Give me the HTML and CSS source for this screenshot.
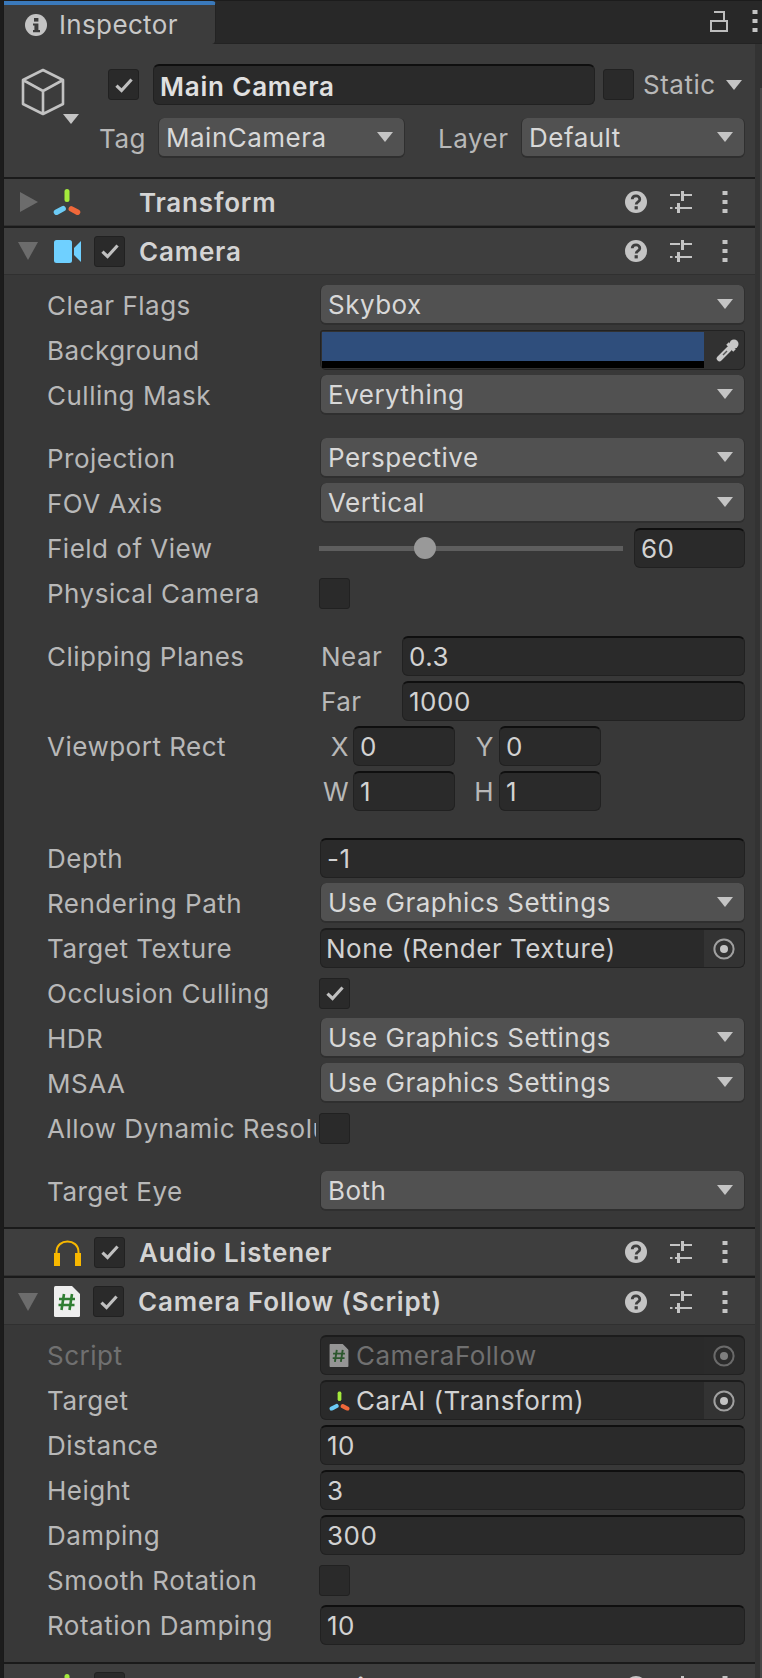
FILE: index.html
```html
<!DOCTYPE html>
<html lang="en">
<head>
    <meta charset="UTF-8">
    <meta name="viewport" content="width=device-width, initial-scale=1.0">
    <title>Inspector</title>
    <link rel="stylesheet" href="styles.css">
</head>
<body>
    <!-- Shared icons -->
    <svg class="defs" width="0" height="0">
        <symbol id="i-check" viewBox="0 0 16 16"><path d="M2.5 8.5 L6.2 12 L13.5 4" fill="none" stroke="currentColor" stroke-width="2.3"/></symbol>
        <symbol id="i-help" viewBox="0 0 22 22"><circle cx="11" cy="11" r="11" fill="#c4c4c4"/><path d="M7.2 8.3 C7.4 3.8 14.8 3.8 14.8 8.3 C14.8 11 11.2 10.8 11.2 13.6" fill="none" stroke="#3e3e3e" stroke-width="2.8"/><rect x="9.6" y="15.2" width="3.2" height="3.2" fill="#3e3e3e"/></symbol>
        <symbol id="i-presets" viewBox="0 0 22 22"><path d="M0 4 H10 M14 4 H22 M0 17 H2.500 M5 17 H7 M9 17 H22" fill="none" stroke="#c4c4c4" stroke-width="2"/><rect x="11" y="0" width="3" height="10" fill="#c4c4c4"/><rect x="7" y="12" width="3" height="10" fill="#c4c4c4"/></symbol>
        <symbol id="i-more" viewBox="0 0 6 22"><rect x="0.5" y="0" width="5" height="4" fill="#c4c4c4"/><rect x="0.5" y="9" width="5" height="4" fill="#c4c4c4"/><rect x="0.5" y="18" width="5" height="4" fill="#c4c4c4"/></symbol>
        <symbol id="i-axes" viewBox="0 0 28 26"><rect x="11.5" y="0" width="5" height="13" rx="2.5" fill="#a4ea3c"/><rect x="0" y="19" width="13" height="5.5" rx="2.7" transform="rotate(-28 6 21)" fill="#6ccbf5"/><rect x="15.5" y="19" width="12.5" height="5.5" rx="2.7" transform="rotate(28 22 21)" fill="#f0683a"/></symbol>
        <symbol id="i-script" viewBox="0 0 26 31"><path d="M0 1.5 Q0 0 1.5 0 H18 L26 8 V29.5 Q26 31 24.5 31 H1.5 Q0 31 0 29.5 Z" fill="#eeeeee"/><path d="M10 8 L7.5 24 M18 8 L15.5 24 M5 13 H21 M4.5 19 H20.5" fill="none" stroke="#2f7d32" stroke-width="2.6"/></symbol>
        <symbol id="i-target" viewBox="0 0 22 22"><circle cx="11" cy="11" r="9.6" fill="none" stroke="#a0a0a0" stroke-width="2"/><circle cx="11" cy="11" r="4" fill="#c4c4c4"/></symbol>
    </svg>

    <div class="panel">
        <div class="tabbar">
            <div class="tab">
                <svg class="tab-icon" viewBox="0 0 22 22"><circle cx="11" cy="11" r="11" fill="#c4c4c4"/><rect x="9" y="4" width="4.4" height="3.6" fill="#3c3c3c"/><path d="M8 9.4 H13.4 V16 H15 V18.2 H8 V16 H9.4 V11.6 H8 Z" fill="#3c3c3c"/></svg>
                <span>Inspector</span>
            </div>
            <div class="tab-actions">
                <svg class="lock" viewBox="0 0 18 22"><path d="M1 11 H17 V21 H1 Z M4 2 H14 V11" fill="none" stroke="#bdbdbd" stroke-width="2"/></svg>
                <svg class="tab-more" viewBox="0 0 6 22"><use href="#i-more"/></svg>
            </div>
        </div>

        <div class="panel-main">
            <div class="content">
                <div class="object-head">
                    <div class="object-icon">
                        <svg class="cube" viewBox="0 0 44 48"><path d="M22 2 L42 12 V36 L22 46 L2 36 V12 Z M2 12 L22 23 L42 12 M22 23 V46" fill="none" stroke="#c2c2c2" stroke-width="2.6" stroke-linejoin="round"/></svg>
                        <i class="arrow object-arrow"></i>
                    </div>
                    <div class="object-fields">
                        <div class="object-line">
                            <span class="check on"><svg viewBox="0 0 16 16"><use href="#i-check"/></svg></span>
                            <div class="field name-field">Main Camera</div>
                            <span class="check"></span>
                            <span class="static-label">Static</span>
                            <i class="arrow"></i>
                        </div>
                        <div class="object-line tag-line">
                            <span class="tag-label">Tag</span>
                            <div class="dropdown tag-drop">MainCamera<i class="arrow"></i></div>
                            <span class="layer-label">Layer</span>
                            <div class="dropdown layer-drop">Default<i class="arrow"></i></div>
                        </div>
                    </div>
                </div>

                <div class="comp-head">
                    <i class="fold closed"></i>
                    <svg class="comp-icon axes" viewBox="0 0 28 26"><use href="#i-axes"/></svg>
                    <span class="no-check"></span>
                    <span class="comp-title">Transform</span>
                    <div class="comp-tools">
                        <svg class="tool" viewBox="0 0 22 22"><use href="#i-help"/></svg>
                        <svg class="tool" viewBox="0 0 22 22"><use href="#i-presets"/></svg>
                        <svg class="tool-more" viewBox="0 0 6 22"><use href="#i-more"/></svg>
                    </div>
                </div>

                <div class="comp-head">
                    <i class="fold"></i>
                    <svg class="comp-icon" viewBox="0 0 27 23"><rect x="0" y="0" width="18" height="23" rx="2.5" fill="#6fd0ff"/><path d="M20 8 L27 1 V22 L20 15 Z" fill="#6fd0ff"/></svg>
                    <span class="check on"><svg viewBox="0 0 16 16"><use href="#i-check"/></svg></span>
                    <span class="comp-title">Camera</span>
                    <div class="comp-tools">
                        <svg class="tool" viewBox="0 0 22 22"><use href="#i-help"/></svg>
                        <svg class="tool" viewBox="0 0 22 22"><use href="#i-presets"/></svg>
                        <svg class="tool-more" viewBox="0 0 6 22"><use href="#i-more"/></svg>
                    </div>
                </div>
                <div class="comp-body">
                    <div class="row"><label>Clear Flags</label><div class="dropdown">Skybox<i class="arrow"></i></div></div>
                    <div class="row">
                        <label>Background</label>
                        <div class="color-field">
                            <div class="swatch"><div class="swatch-alpha"></div></div>
                            <svg class="picker" viewBox="0 0 24 24"><path d="M3.500 20.500 L13 11" stroke="#c8c8c8" stroke-width="5.500" stroke-linecap="round"/><path d="M7 17 L11 13" stroke="#555555" stroke-width="1.500"/><path d="M11.500 5.500 L18.500 12.500" stroke="#c8c8c8" stroke-width="3.500"/><circle cx="18" cy="6" r="4.500" fill="#c8c8c8"/></svg>
                        </div>
                    </div>
                    <div class="row"><label>Culling Mask</label><div class="dropdown">Everything<i class="arrow"></i></div></div>

                    <div class="row gap-top"><label>Projection</label><div class="dropdown">Perspective<i class="arrow"></i></div></div>
                    <div class="row"><label>FOV Axis</label><div class="dropdown">Vertical<i class="arrow"></i></div></div>
                    <div class="row">
                        <label>Field of View</label>
                        <div class="slider"><div class="track"></div><div class="thumb"></div></div>
                        <div class="field slider-value">60</div>
                    </div>
                    <div class="row"><label>Physical Camera</label><span class="check"></span></div>

                    <div class="row gap-top"><label>Clipping Planes</label><span class="sub-label">Near</span><div class="field">0.3</div></div>
                    <div class="row"><label></label><span class="sub-label">Far</span><div class="field">1000</div></div>
                    <div class="row">
                        <label>Viewport Rect</label>
                        <div class="rect-group">
                            <span class="axis">X</span><div class="field rect-field">0</div>
                            <span class="axis second">Y</span><div class="field rect-field">0</div>
                        </div>
                    </div>
                    <div class="row">
                        <label></label>
                        <div class="rect-group">
                            <span class="axis">W</span><div class="field rect-field">1</div>
                            <span class="axis second">H</span><div class="field rect-field">1</div>
                        </div>
                    </div>

                    <div class="row gap-large"><label>Depth</label><div class="field">-1</div></div>
                    <div class="row"><label>Rendering Path</label><div class="dropdown">Use Graphics Settings<i class="arrow"></i></div></div>
                    <div class="row"><label>Target Texture</label><div class="field object-field">None (Render Texture)<span class="target-btn"><svg viewBox="0 0 22 22"><use href="#i-target"/></svg></span></div></div>
                    <div class="row"><label>Occlusion Culling</label><span class="check on"><svg viewBox="0 0 16 16"><use href="#i-check"/></svg></span></div>
                    <div class="row"><label>HDR</label><div class="dropdown">Use Graphics Settings<i class="arrow"></i></div></div>
                    <div class="row"><label>MSAA</label><div class="dropdown">Use Graphics Settings<i class="arrow"></i></div></div>
                    <div class="row"><label>Allow Dynamic Resolution</label><span class="check"></span></div>

                    <div class="row gap-top"><label>Target Eye</label><div class="dropdown">Both<i class="arrow"></i></div></div>
                </div>

                <div class="comp-head">
                    <i class="fold none"></i>
                    <svg class="comp-icon" viewBox="0 0 27 27"><path d="M2.500 25 V13 C2.500 -1 24.500 -1 24.500 13 V25" fill="none" stroke="#f8b800" stroke-width="2"/><rect x="0" y="14" width="6" height="13" fill="#f8b800"/><rect x="21" y="14" width="6" height="13" fill="#f8b800"/></svg>
                    <span class="check on"><svg viewBox="0 0 16 16"><use href="#i-check"/></svg></span>
                    <span class="comp-title">Audio Listener</span>
                    <div class="comp-tools">
                        <svg class="tool" viewBox="0 0 22 22"><use href="#i-help"/></svg>
                        <svg class="tool" viewBox="0 0 22 22"><use href="#i-presets"/></svg>
                        <svg class="tool-more" viewBox="0 0 6 22"><use href="#i-more"/></svg>
                    </div>
                </div>

                <div class="comp-head follow-head">
                    <i class="fold"></i>
                    <svg class="comp-icon script-icon" viewBox="0 0 26 31"><use href="#i-script"/></svg>
                    <span class="check on"><svg viewBox="0 0 16 16"><use href="#i-check"/></svg></span>
                    <span class="comp-title">Camera Follow (Script)</span>
                    <div class="comp-tools">
                        <svg class="tool" viewBox="0 0 22 22"><use href="#i-help"/></svg>
                        <svg class="tool" viewBox="0 0 22 22"><use href="#i-presets"/></svg>
                        <svg class="tool-more" viewBox="0 0 6 22"><use href="#i-more"/></svg>
                    </div>
                </div>
                <div class="comp-body follow-body">
                    <div class="row disabled">
                        <label>Script</label>
                        <div class="field object-field">
                            <svg class="inline-script" viewBox="0 0 26 31"><use href="#i-script"/></svg>CameraFollow
                            <span class="target-btn"><svg viewBox="0 0 22 22"><use href="#i-target"/></svg></span>
                        </div>
                    </div>
                    <div class="row">
                        <label>Target</label>
                        <div class="field object-field">
                            <svg class="inline-axes" viewBox="0 0 28 26"><use href="#i-axes"/></svg>CarAI (Transform)
                            <span class="target-btn"><svg viewBox="0 0 22 22"><use href="#i-target"/></svg></span>
                        </div>
                    </div>
                    <div class="row"><label>Distance</label><div class="field">10</div></div>
                    <div class="row"><label>Height</label><div class="field">3</div></div>
                    <div class="row"><label>Damping</label><div class="field">300</div></div>
                    <div class="row"><label>Smooth Rotation</label><span class="check"></span></div>
                    <div class="row"><label>Rotation Damping</label><div class="field">10</div></div>
                </div>

                <div class="comp-head">
                    <i class="fold none"></i>
                    <svg class="comp-icon axes" viewBox="0 0 28 26"><use href="#i-axes"/></svg>
                    <span class="check"></span>
                    <span class="comp-title">Tracked Pose Driver</span>
                    <div class="comp-tools">
                        <svg class="tool" viewBox="0 0 22 22"><use href="#i-help"/></svg>
                        <svg class="tool" viewBox="0 0 22 22"><use href="#i-presets"/></svg>
                        <svg class="tool-more" viewBox="0 0 6 22"><use href="#i-more"/></svg>
                    </div>
                </div>
            </div>
            <div class="scrollbar"><div class="scroll-thumb"></div></div>
        </div>
    </div>
</body>
</html>
```

FILE: styles.css
```css
* {
    margin: 0;
    padding: 0;
    box-sizing: border-box;
}

html, body {
    width: 762px;
    height: 1678px;
    overflow: hidden;
}

body {
    padding-left: 3px;
    background-color: #1c1c1c;
    color: #d2d2d2;
    font-family: 'Inter', 'Liberation Sans', sans-serif;
    font-size: 26px;
    letter-spacing: 0.5px;
}

.defs {
    position: absolute;
}

.panel {
    height: 1678px;
    border-left: 1px solid #1a1a1a;
    overflow: hidden;
}

/* Tab bar */
.tabbar {
    height: 44px;
    display: flex;
    justify-content: space-between;
    background-color: #282828;
    border-top: 1px solid #1c1c1c;
    border-bottom: 1px solid #232323;
}

.tab {
    width: 212px;
    height: 43px;
    display: flex;
    align-items: center;
    gap: 12px;
    padding-left: 21px;
    letter-spacing: 0.35px;
    color: #c8c8c8;
    background-color: #3c3c3c;
    border-top: 4px solid #3a79bb;
    border-right: 1px solid #232323;
    border-radius: 0 4px 4px 0;
}

.tab-icon {
    width: 22px;
    height: 22px;
}

.tab-actions {
    display: flex;
    align-items: center;
    gap: 24px;
    padding: 0 4px 3px 0;
}

.lock {
    width: 18px;
    height: 22px;
}

.tab-more {
    width: 6px;
    height: 22px;
}

.panel-main {
    display: flex;
}

.content {
    flex: none;
    width: 751px;
    background-color: #383838;
}

.scrollbar {
    flex: 1;
    height: 1634px;
    padding: 44px 0 0 5px;
    background-color: #333333;
}

.scroll-thumb {
    height: 1590px;
    background-color: #474747;
}

/* Object header */
.object-head {
    height: 133px;
    display: flex;
    background-color: #3c3c3c;
}

.object-icon {
    position: relative;
    flex: none;
    width: 96px;
    padding: 24px 0 0 17px;
}

.cube {
    display: block;
    width: 44px;
    height: 48px;
}

.object-arrow {
    position: absolute;
    left: 59px;
    top: 70px;
}

.object-fields {
    flex: 1;
    padding-top: 20px;
}

.object-line {
    height: 41px;
    display: flex;
    align-items: center;
    padding-left: 8px;
}

.object-line .name-field {
    flex: none;
    width: 442px;
    height: 41px;
    margin: 0 8px 0 14px;
    padding-top: 3px;
    font-weight: 600;
    letter-spacing: 0.8px;
    color: #e0e0e0;
}

.static-label {
    margin: 0 10px 0 9px;
    color: #b8b8b8;
}

.object-line.tag-line {
    padding-left: 0;
    margin-top: 13px;
    height: 40px;
}

.tag-label, .layer-label {
    flex: none;
    color: #b8b8b8;
}

.tag-label {
    width: 58px;
    margin-left: -1px;
    margin-right: 1px;
}

.object-line .tag-drop {
    flex: none;
    width: 247px;
}

.layer-label {
    width: 83px;
    margin-left: 33px;
}

.object-line .layer-drop {
    flex: none;
    width: 224px;
}

/* Component header */
.comp-head {
    height: 49px;
    display: flex;
    align-items: center;
    background-color: #3e3e3e;
    border-top: 2px solid #1a1a1a;
    border-bottom: 1px solid #303030;
}

.follow-head {
    padding-top: 1px;
}

.fold {
    flex: none;
    width: 0;
    height: 0;
    margin-left: 14px;
    border-style: solid;
    border-width: 18px 10px 0 10px;
    border-color: #6c6c6c transparent transparent transparent;
}

.fold.closed {
    margin-left: 16px;
    border-width: 10px 0 10px 18px;
    border-color: transparent transparent transparent #6c6c6c;
}

.fold.none {
    visibility: hidden;
}

.comp-icon {
    flex: none;
    width: 27px;
    height: 27px;
    margin-left: 16px;
}

.comp-icon.axes {
    width: 28px;
    height: 26px;
    margin-left: 15px;
}

.comp-icon.script-icon {
    width: 26px;
    height: 31px;
}

.no-check {
    flex: none;
    width: 31px;
    margin-left: 13px;
}

.comp-head .check {
    margin-left: 13px;
}

.comp-title {
    margin-left: 14px;
    font-weight: 600;
    letter-spacing: 0.8px;
    white-space: nowrap;
    color: #d4d4d4;
}

.comp-tools {
    margin-left: auto;
    display: flex;
    align-items: center;
    padding-right: 27px;
}

.tool {
    width: 22px;
    height: 22px;
    margin-right: 23px;
}

.tool:nth-child(2) {
    margin-right: 30px;
}

.tool-more {
    width: 6px;
    height: 22px;
}

/* Property rows */
.comp-body {
    padding: 10px 10px 11px 43px;
}

.follow-body {
    padding-bottom: 12px;
}

.row {
    height: 40px;
    margin-bottom: 5px;
    display: flex;
    align-items: center;
}

.gap-top {
    margin-top: 23px;
}

.gap-large {
    margin-top: 27px;
}

.row label {
    flex: none;
    width: 269px;
    margin-right: 4px;
    white-space: nowrap;
    overflow: hidden;
    color: #b8b8b8;
}

.row > .check {
    margin-left: -1px;
}

.disabled label, .disabled .field {
    color: #707070;
}

.disabled .target-btn {
    background-color: #2c2c2c;
    opacity: 0.55;
}

.disabled .inline-script {
    opacity: 0.55;
}

/* Fields */
.dropdown, .field {
    flex: 1;
    height: 40px;
    display: flex;
    align-items: center;
    border-radius: 6px;
    white-space: nowrap;
}

.dropdown {
    justify-content: space-between;
    padding: 0 11px 0 7px;
    color: #d8d8d8;
    background-color: #515151;
    border: 1px solid #2f2f2f;
    border-width: 0 1px 2px 1px;
}

.field {
    padding-left: 6px;
    color: #d2d2d2;
    background-color: #2a2a2a;
    border: 1px solid #212121;
    border-top: 2px solid #0f0f0f;
}

.arrow {
    flex: none;
    width: 0;
    height: 0;
    border-style: solid;
    border-width: 10px 8px 0 8px;
    border-color: #c4c4c4 transparent transparent transparent;
}

.check {
    flex: none;
    width: 31px;
    height: 31px;
    display: flex;
    align-items: center;
    justify-content: center;
    color: #c0c0c0;
    background-color: #2a2a2a;
    border: 1px solid #212121;
    border-radius: 3px;
}

.check svg {
    width: 22px;
    height: 22px;
}

.color-field {
    flex: 1;
    height: 40px;
    display: flex;
    align-items: center;
    padding: 1px 0 1px 1px;
    background-color: #313131;
    border: 1px solid #222222;
    border-radius: 3px 3px 6px 6px;
}

.swatch {
    flex: none;
    width: 382px;
    height: 36px;
    display: flex;
    align-items: flex-end;
    background-color: #2f4e7c;
}

.swatch-alpha {
    width: 100%;
    height: 7px;
    background-color: #000000;
}

.picker {
    flex: none;
    width: 24px;
    height: 24px;
    margin-left: 12px;
}

.slider {
    position: relative;
    flex: none;
    width: 304px;
    height: 40px;
    margin: 0 11px 0 -1px;
    display: flex;
    align-items: center;
}

.track {
    width: 100%;
    height: 5px;
    background-color: #5e5e5e;
}

.thumb {
    position: absolute;
    left: 95px;
    top: 9px;
    width: 22px;
    height: 22px;
    border-radius: 50%;
    background-color: #999999;
}

.row .slider-value {
    flex: none;
    width: 111px;
}

.sub-label {
    flex: none;
    width: 81px;
    margin-left: 1px;
    color: #b8b8b8;
}

.rect-group {
    display: flex;
    align-items: center;
}

.axis {
    flex: none;
    width: 33px;
    padding-right: 4px;
    text-align: right;
    color: #b8b8b8;
}

.axis.second {
    width: 44px;
    padding-right: 5px;
}

.rect-group .rect-field {
    flex: none;
    width: 102px;
}

.field.object-field {
    position: relative;
    padding-left: 5px;
    border-top-color: #1c1c1c;
}

.target-btn {
    position: absolute;
    right: 0;
    top: 0;
    bottom: 0;
    width: 40px;
    display: flex;
    align-items: center;
    justify-content: center;
    background-color: #333333;
    border-radius: 0 5px 5px 0;
}

.target-btn svg {
    width: 22px;
    height: 22px;
}

.inline-script {
    flex: none;
    width: 20px;
    height: 23px;
    margin: 0 7px 0 3px;
}

.inline-axes {
    flex: none;
    width: 21px;
    height: 20px;
    margin: 0 6px 0 3px;
}
```
